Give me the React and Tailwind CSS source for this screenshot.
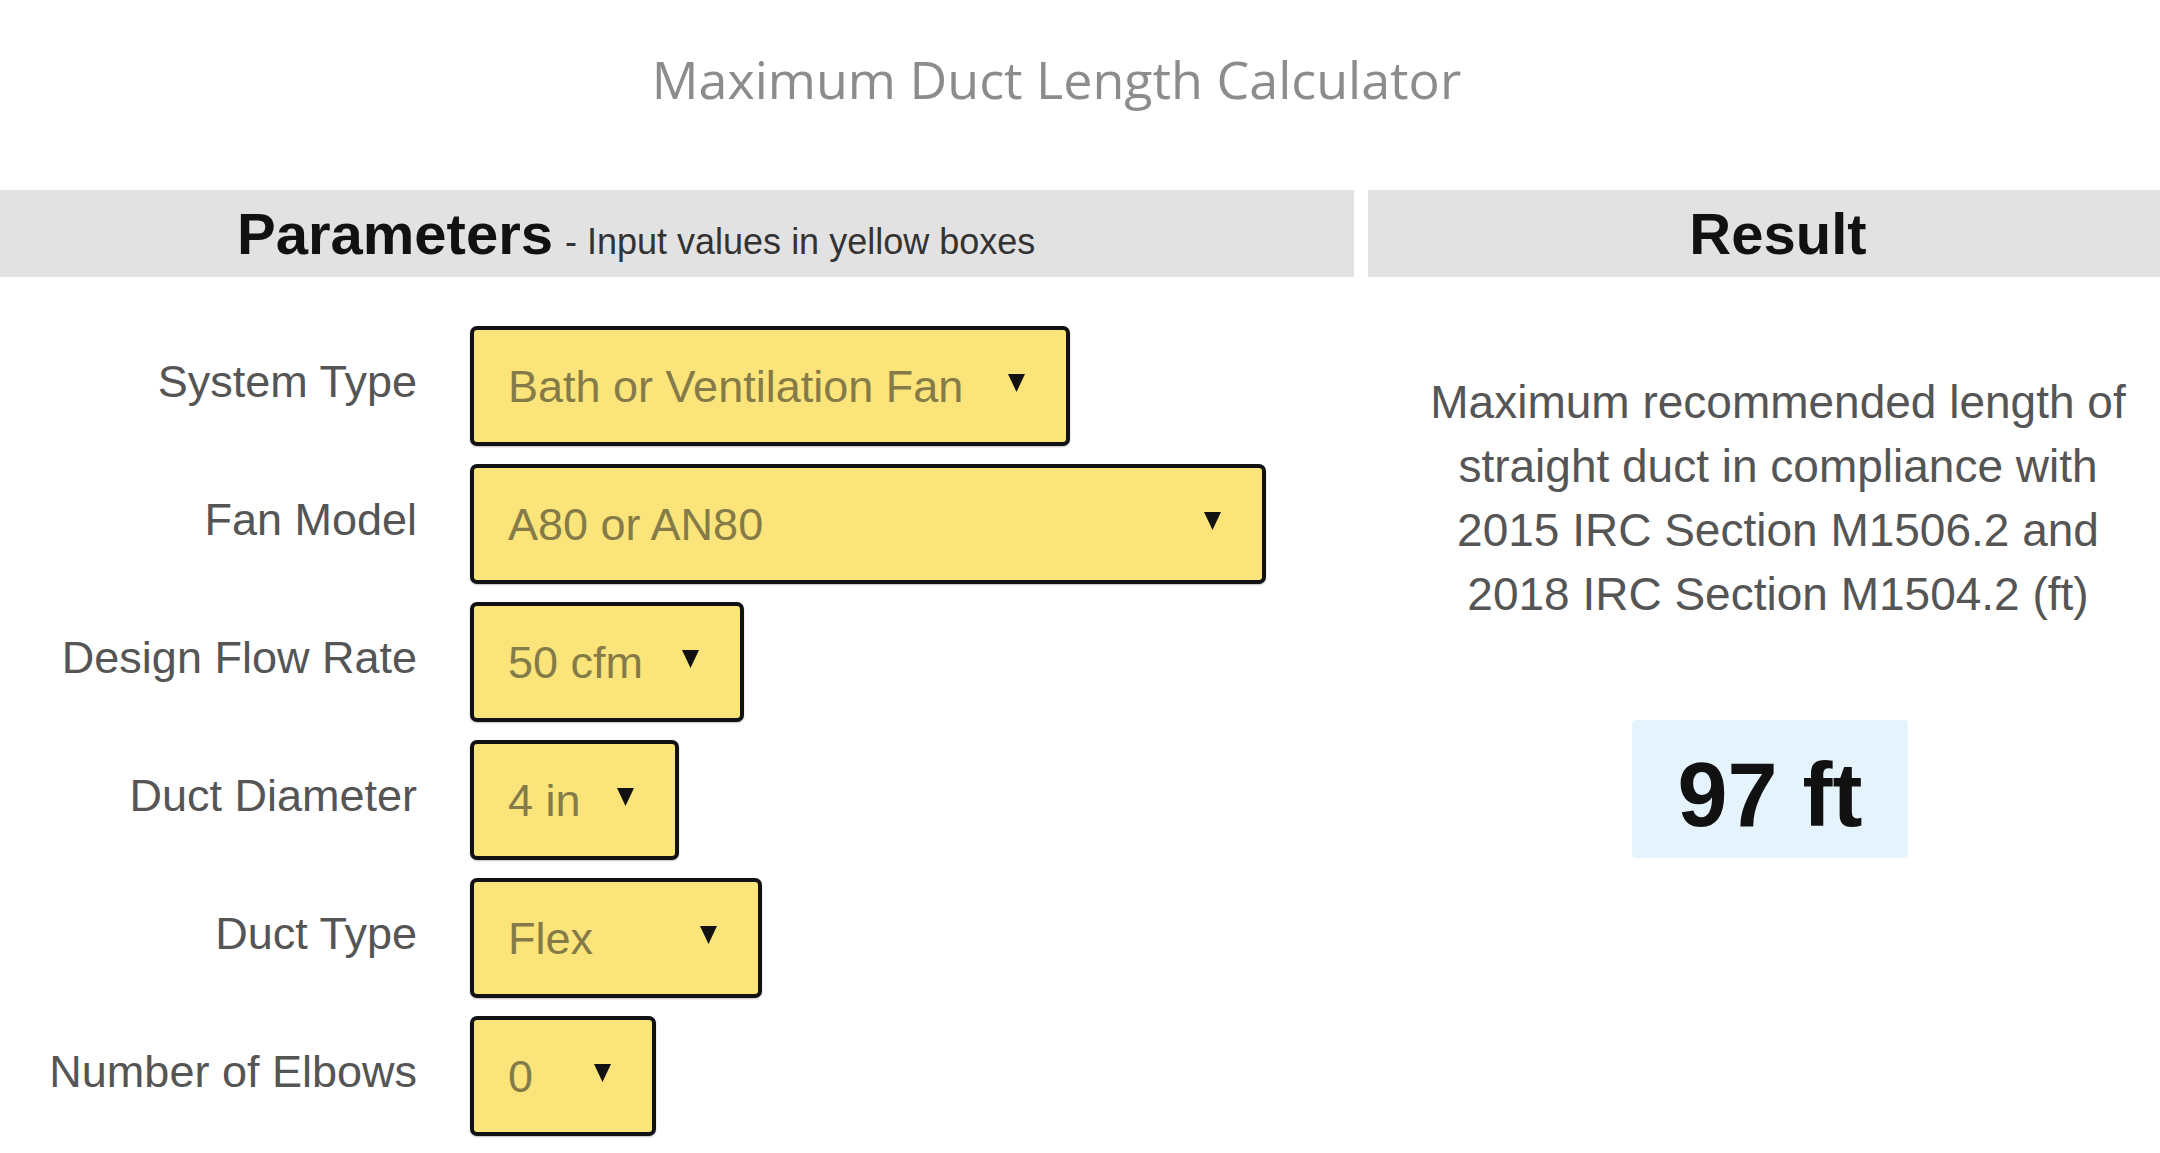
const rows = [
  { label: "System Type", value: "Bath or Ventilation Fan", width: "w-[600px]" },
  { label: "Fan Model", value: "A80 or AN80", width: "w-[796px]" },
  { label: "Design Flow Rate", value: "50 cfm", width: "w-[274px]" },
  { label: "Duct Diameter", value: "4 in", width: "w-[209px]" },
  { label: "Duct Type", value: "Flex", width: "w-[292px]" },
  { label: "Number of Elbows", value: "0", width: "w-[186px]" },
]

function Arrow() {
  return (
    <svg width="19" height="21" viewBox="0 0 19 21" className="shrink-0 mb-[8px]">
      <polygon points="1,2 18,2 9.5,20" fill="#111" />
    </svg>
  )
}

function SelectBox({ value, width }) {
  return (
    <div
      className={`${width} h-[120px] border-4 border-[#111] rounded-[7px] bg-[#fbe47a] flex items-center justify-between pl-[34px] pr-[40px] shadow-[0_1px_2px_rgba(0,0,0,0.25)]`}
    >
      <span className="text-[45px] text-[#857b48] leading-none">{value}</span>
      <Arrow />
    </div>
  )
}

export default function App() {
  return (
    <div className="w-[2160px] h-[1153px] overflow-hidden bg-white font-['Liberation_Sans',Arial,sans-serif]">
      <div className="h-[190px] pt-[49px] pr-[47px] text-center">
        <h1 className="text-[52px] leading-[60px] font-normal text-[#8c8c8c] font-['Open_Sans',sans-serif]">
          Maximum Duct Length Calculator
        </h1>
      </div>

      <div className="flex gap-[14px] w-[2188px]">
        <section className="w-[1354px] shrink-0">
          <div className="h-[87px] bg-[#e2e2e2] flex items-center pl-[237px]">
            <div className="flex items-baseline gap-[12px]">
              <span className="text-[58px] font-bold text-[#111]">Parameters</span>
              <span className="text-[36px] text-[#333]">- Input values in yellow boxes</span>
            </div>
          </div>

          <div className="flex flex-col gap-[18px] mt-[49px]">
            {rows.map((row) => (
              <div key={row.label} className="flex items-center gap-[53px]">
                <div className="w-[417px] text-right text-[45px] text-[#555] pb-[8px]">
                  {row.label}
                </div>
                <SelectBox value={row.value} width={row.width} />
              </div>
            ))}
          </div>
        </section>

        <section className="w-[820px] shrink-0">
          <div className="h-[87px] bg-[#e2e2e2] flex items-center justify-center">
            <span className="text-[58px] font-bold text-[#111]">Result</span>
          </div>

          <p className="mt-[93px] text-center text-[46px] leading-[64px] text-[#555]">
            Maximum recommended length of
            <br />
            straight duct in compliance with
            <br />
            2015 IRC Section M1506.2 and
            <br />
            2018 IRC Section M1504.2 (ft)
          </p>

          <div className="flex justify-center mt-[94px] pr-[16px]">
            <div className="w-[276px] h-[138px] bg-[#e5f4fc] rounded-[4px] flex items-center justify-center pt-[12px]">
              <span className="text-[90px] font-bold text-[#111] leading-none">97 ft</span>
            </div>
          </div>
        </section>
      </div>
    </div>
  )
}
